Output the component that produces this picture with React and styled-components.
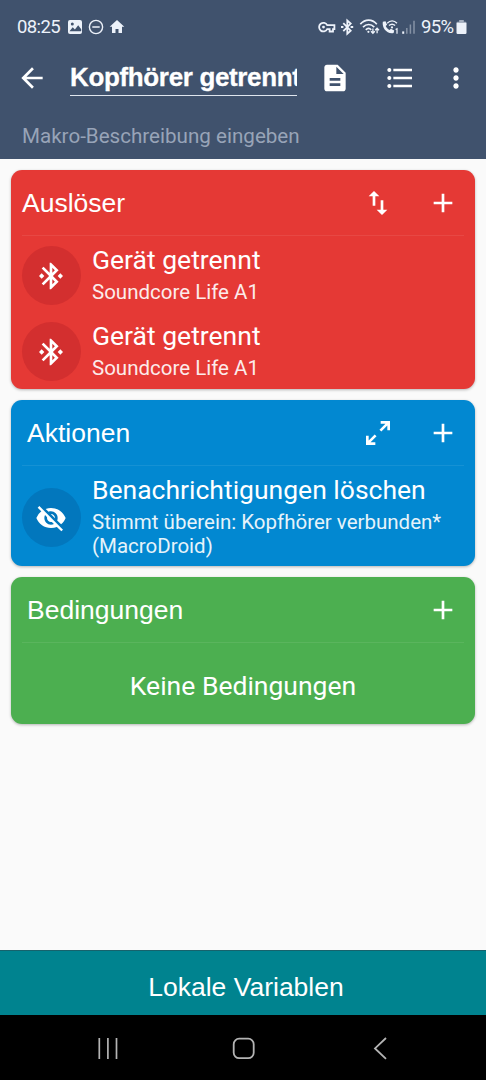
import styled, { createGlobalStyle } from "styled-components";
import {
  MdAdd,
  MdArrowBack,
  MdBluetoothConnected,
  MdDescription,
  MdFormatListBulleted,
  MdMoreVert,
  MdSwapVert,
  MdVisibilityOff,
} from "react-icons/md";

const GlobalStyle = createGlobalStyle`
  * {
    box-sizing: border-box;
  }
  body {
    margin: 0;
    background: #fafafa;
    font-family: Roboto, sans-serif;
  }
`;

const Screen = styled.div`
  display: flex;
  flex-direction: column;
  width: 486px;
  height: 1080px;
  overflow: hidden;
  color: #fff;
  background: #fafafa;
`;

const Header = styled.header`
  height: 159px;
  background: #40526d;
`;

const StatusBar = styled.div`
  display: flex;
  align-items: center;
  justify-content: space-between;
  height: 54px;
  padding: 0 19px 0 17px;
  color: #edf2fa;
`;

const StatusGroup = styled.div`
  display: flex;
  align-items: center;
  svg {
    display: block;
  }
`;

const StatusText = styled.span`
  width: ${(p) => p.$width}px;
  margin-left: ${(p) => p.$left || 0}px;
  font-size: 18.5px;
  line-height: 22px;
  letter-spacing: -0.6px;
  white-space: nowrap;
`;

const Toolbar = styled.div`
  display: flex;
  align-items: center;
  height: 47px;
  padding-left: 16px;
  svg {
    flex: none;
  }
`;

const MacroName = styled.div`
  width: 227px;
  height: 37px;
  margin: 0 22px 0 22px;
  overflow: hidden;
  border-bottom: 1px solid #dfe5ee;
  font: bold 26px/37px "Liberation Sans", Arial, sans-serif;
  letter-spacing: -0.35px;
  white-space: nowrap;
  -webkit-text-stroke: 0.3px #fff;
`;

const ToolbarIcons = styled.div`
  display: flex;
  align-items: center;
  gap: 32.5px;
  svg:last-child {
    margin-left: -8px;
  }
`;

const Description = styled.div`
  padding: 21px 22px 0;
  color: #98a4b8;
  font-size: 20.6px;
  line-height: 28px;
`;

const Cards = styled.main`
  display: flex;
  flex: 1;
  flex-direction: column;
  gap: 11px;
  padding: 11px 11px 0;
`;

const Card = styled.section`
  height: ${(p) => p.$height}px;
  padding: 0 11px;
  border-radius: 11px;
  background: ${(p) => p.$color};
  box-shadow: 0 1px 3px rgba(0, 0, 0, 0.28);
`;

const CardHeader = styled.div`
  display: flex;
  align-items: center;
  height: 66px;
  padding: 0 5px 0 ${(p) => p.$indent || 0}px;
  border-bottom: 1px solid rgba(255, 255, 255, 0.08);
  svg {
    margin-left: 33px;
  }
`;

const CardTitle = styled.h2`
  flex: 1;
  margin: 0;
  font: 26.5px/30px "Liberation Sans", Arial, sans-serif;
`;

const Entry = styled.div`
  display: flex;
  align-items: center;
  height: ${(p) => p.$height || 76}px;
  padding-top: 3px;
`;

const Badge = styled.div`
  display: flex;
  flex: none;
  align-items: center;
  justify-content: center;
  width: 59px;
  height: 59px;
  padding-right: 1px;
  margin-right: 11px;
  border-radius: 50%;
  background: ${(p) => p.$color};
`;

const EntryTitle = styled.div`
  padding-bottom: 4px;
  font-size: 26.5px;
  line-height: 32px;
`;

const EntryText = styled.div`
  margin-top: -4px;
`;

const EntryDetail = styled.div`
  font-size: 20.5px;
  line-height: 24px;
  opacity: 0.9;
`;

const Empty = styled.div`
  padding-top: 27px;
  font-size: 26.5px;
  line-height: 32px;
  text-align: center;
`;

const LocalVariables = styled.div`
  height: 65px;
  padding: 7px 0 0 6px;
  border-top: 1px solid #17626c;
  background: #00838f;
  font: 26.5px/58px "Liberation Sans", Arial, sans-serif;
  text-align: center;
`;

const NavBar = styled.nav`
  display: flex;
  justify-content: space-between;
  height: 65px;
  padding: 22px 95px 0;
  background: #000;
`;

const triggers = [
  { id: 1, title: "Gerät getrennt", detail: "Soundcore Life A1" },
  { id: 2, title: "Gerät getrennt", detail: "Soundcore Life A1" },
];

function ExpandIcon() {
  return (
    <svg width="32" height="32" viewBox="0 0 24 24" fill="currentColor">
      <path d="M10 21v-2H6.41l4.5-4.5-1.41-1.41-4.5 4.5V14H3v7h7zM14.5 10.91l4.5-4.5V10h2V3h-7v2h3.59l-4.5 4.5 1.41 1.41z" />
    </svg>
  );
}

// picture, do not disturb, home
function NotificationIcons() {
  return (
    <svg width="58" height="16" viewBox="0 0 58 16" fill="none">
      <rect x="1" y="1" width="14" height="14" rx="2" fill="currentColor" />
      <circle cx="5.3" cy="5" r="1.5" fill="#40526d" />
      <path d="M2.5 12.3l3.2-4 2.2 2.2 3.3-4.2 3 4v2z" fill="#40526d" />
      <circle cx="29" cy="8" r="6.6" stroke="currentColor" strokeWidth="1.4" />
      <path d="M25.3 8h7.4" stroke="currentColor" strokeWidth="1.5" />
      <path
        d="M50 .9l7.3 6.9H55V14h-3.5v-4h-3v4H45V7.8h-2.3z"
        fill="currentColor"
      />
    </svg>
  );
}

// vpn key, bluetooth, wifi, wifi calling, signal
function ConnectionIcons() {
  return (
    <svg
      width="98"
      height="18"
      viewBox="318 18 98 18"
      fill="none"
      stroke="currentColor"
      strokeWidth="1.5"
    >
      <path
        d="M327.2 25.1a4.3 4.3 0 1 0 0 4h2.4v2.4h3.4v-2.4h1.4v-4z"
        strokeWidth="1.8"
      />
      <circle cx="323.5" cy="27.1" r="1.4" fill="currentColor" stroke="none" />
      <path
        d="M343.3 23.2l7.4 7.4-3.4 3.1V20.6l3.4 3-7.4 7.5"
        strokeWidth="1.8"
      />
      <path d="M341 27h2.4M350.6 27h2.6" strokeWidth="2.2" />
      <path
        d="M360.3 24.2c5-5.4 11.8-5.3 16.5 0M363 27.2c3.4-3.6 7.9-3.6 11.3 0M365.8 29.8c1.8-1.8 3.7-1.8 5.4 0"
        strokeWidth="1.7"
      />
      <circle cx="368.4" cy="31.8" r="1.1" fill="currentColor" stroke="none" />
      <path
        d="M372.9 28.5v4.8m-1.9-2l1.9 2 1.9-2M377.1 33.2v-5m-1.9 2l1.9-2 1.9 2"
        strokeWidth="1.3"
      />
      <path
        d="M382.8 21.8l2.7-.5 1.6 3.4-1.4 1.4c.8 1.9 2 3 3.8 4l1.4-1.4 3.3 1.7-.6 2.6c-6.4 1.4-11.8-4.6-10.8-11.2z"
        fill="currentColor"
        stroke="none"
      />
      <path
        d="M387.2 23.2c3-3.1 6.8-3.1 9.8 0M389 25.6c2-1.9 4.1-1.9 6.1 0"
        strokeWidth="1.4"
      />
      <circle cx="392" cy="27.4" r="1.1" fill="currentColor" stroke="none" />
      <path d="M395.6 29.6l1.4-.8v5" strokeWidth="1.2" />
      <path d="M403.2 31.4v2.4" strokeWidth="2" />
      <path
        d="M406.8 28v5.8M410.4 24.6v9.2M414 20.8v13"
        strokeWidth="1.5"
        opacity=".4"
      />
    </svg>
  );
}

function BatteryIcon() {
  return (
    <svg width="11" height="16" viewBox="0 0 11 16" fill="currentColor">
      <path
        d="M3.2 1h4.6v1.8h1.5q1.2 0 1.2 1.2H.5q0-1.2 1.2-1.2h1.5z"
        opacity=".6"
      />
      <path d="M.5 4h10v9.8q0 1.2-1.2 1.2H1.7Q.5 15 .5 13.8z" />
    </svg>
  );
}

function SystemNav() {
  return (
    <NavBar>
      <svg width="26" height="23" fill="none" stroke="#b4b4b4" strokeWidth="1.7">
        <path d="M4.3 1v21M12.9 1v21M21.5 1v21" />
      </svg>
      <svg width="26" height="23" fill="none" stroke="#b4b4b4" strokeWidth="1.8">
        <rect x="3.7" y="1.7" width="20" height="19.5" rx="5.5" />
      </svg>
      <svg width="26" height="23" fill="none" stroke="#b4b4b4" strokeWidth="1.8">
        <path d="M21 1L10 11.4l11 10.4" />
      </svg>
    </NavBar>
  );
}

export default function App() {
  return (
    <Screen>
      <GlobalStyle />
      <Header>
        <StatusBar>
          <StatusGroup>
            <StatusText $width={50}>08:25</StatusText>
            <NotificationIcons />
          </StatusGroup>
          <StatusGroup>
            <ConnectionIcons />
            <StatusText $width={35} $left={5}>
              95%
            </StatusText>
            <BatteryIcon />
          </StatusGroup>
        </StatusBar>
        <Toolbar>
          <MdArrowBack size={32} />
          <MacroName>Kopfhörer getrennt</MacroName>
          <ToolbarIcons>
            <MdDescription size={32} />
            <MdFormatListBulleted size={32} />
            <MdMoreVert size={32} />
          </ToolbarIcons>
        </Toolbar>
        <Description>Makro-Beschreibung eingeben</Description>
      </Header>
      <Cards>
        <Card $color="#e53935" $height={219}>
          <CardHeader>
            <CardTitle>Auslöser</CardTitle>
            <MdSwapVert size={32} />
            <MdAdd size={32} />
          </CardHeader>
          {triggers.map((trigger) => (
            <Entry key={trigger.id}>
              <Badge $color="#d32f2f">
                <MdBluetoothConnected size={32} />
              </Badge>
              <EntryText>
                <EntryTitle>{trigger.title}</EntryTitle>
                <EntryDetail>{trigger.detail}</EntryDetail>
              </EntryText>
            </Entry>
          ))}
        </Card>
        <Card $color="#0288d1" $height={166}>
          <CardHeader $indent={5}>
            <CardTitle>Aktionen</CardTitle>
            <ExpandIcon />
            <MdAdd size={32} />
          </CardHeader>
          <Entry $height={100}>
            <Badge $color="#0277bd">
              <MdVisibilityOff size={32} />
            </Badge>
            <EntryText>
              <EntryTitle>Benachrichtigungen löschen</EntryTitle>
              <EntryDetail>
                Stimmt überein: Kopfhörer verbunden*
                <br />
                (MacroDroid)
              </EntryDetail>
            </EntryText>
          </Entry>
        </Card>
        <Card $color="#4caf50" $height={147}>
          <CardHeader $indent={5}>
            <CardTitle>Bedingungen</CardTitle>
            <MdAdd size={32} />
          </CardHeader>
          <Empty>Keine Bedingungen</Empty>
        </Card>
      </Cards>
      <LocalVariables>Lokale Variablen</LocalVariables>
      <SystemNav />
    </Screen>
  );
}
